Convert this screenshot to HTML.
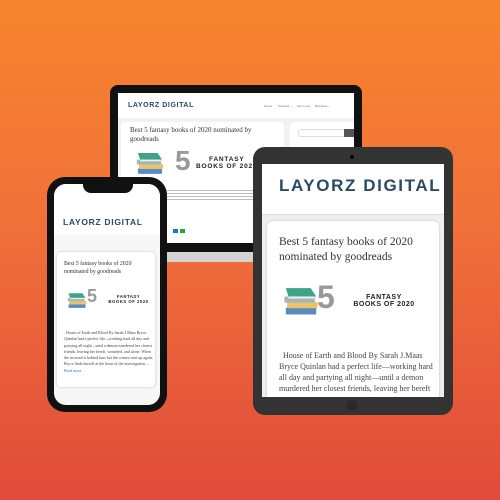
<!DOCTYPE html>
<html><head><meta charset="utf-8"><style>
*{margin:0;padding:0;box-sizing:border-box}
body{width:500px;height:500px;overflow:hidden;position:relative;background:linear-gradient(180deg,#f7852d 0%,#f0703a 45%,#e04b3a 100%);font-family:"Liberation Serif",serif}
.a{position:absolute}
.logo{font-family:"Liberation Sans",sans-serif;font-weight:bold;color:#2b4a5f;white-space:nowrap}
.t{color:#333;font-family:"Liberation Serif",serif}
.five{font-family:"Liberation Sans",sans-serif;font-weight:bold;color:#999}
.fb{font-family:"Liberation Sans",sans-serif;font-weight:bold;color:#222;letter-spacing:.5px;text-align:center;line-height:1.05}
.body{color:#444;font-family:"Liberation Serif",serif}
</style></head><body>
<svg width="0" height="0" style="position:absolute"><defs>
<g id="bk"><rect x="2" y="14" width="22" height="5" rx="1" fill="#5a8bc0"/><rect x="3" y="10" width="22" height="4.5" rx="1" fill="#e9c46a"/><rect x="1" y="6" width="22" height="4.5" rx="1" fill="#a9b3b8"/><path d="M2 0 L20 0 L24 6 L4 6Z" fill="#3fa38a"/><rect x="4" y="6" width="20" height="1.5" fill="#eee"/></g>
</defs></svg>

<!-- laptop -->
<div class="a" style="left:110px;top:85px;width:252px;height:170px;background:#111;border-radius:8px"></div>
<div class="a" style="left:104px;top:252px;width:264px;height:10px;background:#d3d3d3;border-radius:0 0 6px 6px"></div>
<div class="a" style="left:118px;top:93px;width:236px;height:150px;background:#f2f2f2;overflow:hidden">
 <div class="a" style="left:0;top:0;width:236px;height:25px;background:#fff"></div>
 <div class="a logo" style="left:10px;top:9px;font-size:7px;letter-spacing:.6px">LAYORZ DIGITAL</div>
 <div class="a" style="left:146px;top:11px;font-size:3px;color:#4a7ab0;font-family:Liberation Sans;white-space:nowrap">Home &nbsp;&nbsp;&nbsp;&nbsp;&nbsp; Success ⌄ &nbsp;&nbsp;&nbsp;&nbsp; Eco Lens &nbsp;&nbsp;&nbsp;&nbsp; Business ⌄</div>
 <div class="a" style="left:3px;top:29px;width:163px;height:130px;background:#fff;border-radius:4px"></div>
 <div class="a" style="left:172px;top:29px;width:64px;height:40px;background:#fff;border-radius:4px"></div>
 <div class="a" style="left:180px;top:36px;width:50px;height:8px;border:1px solid #ddd;border-radius:3px;background:#fff"></div>
 <div class="a" style="left:226px;top:36px;width:10px;height:8px;background:#555"></div>
 <div class="a t" style="left:12px;top:33px;width:145px;font-size:7px;line-height:9px">Best 5 fantasy books of 2020 nominated by goodreads</div>
 <svg class="a" style="left:17px;top:60px" width="30" height="22" viewBox="0 0 26 20"><use href="#bk"/></svg>
 <div class="a five" style="left:57px;top:52px;font-size:28px">5</div>
 <div class="a fb" style="left:78px;top:64px;width:88px;font-size:6.5px;text-align:left;letter-spacing:.8px">&nbsp;&nbsp;&nbsp;&nbsp;&nbsp;FANTASY<br>BOOKS OF 2020</div>
 <div class="a" style="left:48px;top:97px;width:115px;height:1px;background:#bbb;box-shadow:0 3px 0 #bbb,0 6px 0 #bbb,0 9px 0 #bbb"></div>
 <div class="a" style="left:55px;top:136px;width:5px;height:4px;background:#1d79c0"></div>
 <div class="a" style="left:62px;top:136px;width:5px;height:4px;background:#2aa83a"></div>
</div>

<!-- tablet -->
<div class="a" style="left:253px;top:147px;width:200px;height:268px;background:#333;border-radius:12px"></div>
<div class="a" style="left:350px;top:155px;width:4px;height:4px;background:#000;border-radius:50%"></div>
<div class="a" style="left:346px;top:400px;width:12px;height:10px;background:#2a2a2a;border-radius:50%"></div>
<div class="a" style="left:262px;top:164px;width:182px;height:233px;background:#efefef;overflow:hidden">
 <div class="a" style="left:0;top:0;width:182px;height:51px;background:#fff;border-bottom:1px solid #ddd"></div>
 <div class="a logo" style="left:17px;top:12px;font-size:17px;letter-spacing:1.6px">LAYORZ DIGITAL</div>
 <div class="a" style="left:5px;top:57px;width:172px;height:190px;background:#fff;border-radius:6px;box-shadow:0 0 2px #bbb"></div>
 <div class="a t" style="left:17px;top:71px;width:160px;font-size:11.5px;line-height:14.5px">Best 5 fantasy books of 2020 nominated by goodreads</div>
 <svg class="a" style="left:21px;top:124px" width="36" height="28" viewBox="0 0 26 20"><use href="#bk"/></svg>
 <div class="a five" style="left:55px;top:116px;font-size:32px;line-height:34px">5</div>
 <div class="a fb" style="left:82px;top:130px;width:80px;font-size:7px">FANTASY<br>BOOKS OF 2020</div>
 <div class="a body" style="left:17px;top:186px;width:158px;font-size:8px;line-height:11px">&nbsp; House of Earth and Blood By Sarah J.Maas Bryce Quinlan had a perfect life—working hard all day and partying all night—until a demon murdered her closest friends, leaving her bereft</div>
</div>

<!-- phone -->
<div class="a" style="left:47px;top:177px;width:120px;height:235px;background:#111;border-radius:18px"></div>
<div class="a" style="left:54px;top:184px;width:106px;height:221px;background:#f7f7f7;border-radius:12px;overflow:hidden">
 <div class="a" style="left:0;top:0;width:106px;height:50px;background:#fff"></div>
 <div class="a logo" style="left:9px;top:33px;font-size:8.5px;letter-spacing:.7px">LAYORZ DIGITAL</div>
 <div class="a" style="left:3px;top:68px;width:98px;height:135px;background:#fff;border-radius:4px;box-shadow:0 0 2px #bbb"></div>
 <div class="a t" style="left:10px;top:77px;width:90px;font-size:5.8px;line-height:7.5px">Best 5 fantasy books of 2020 nominated by goodreads</div>
 <svg class="a" style="left:13px;top:109px" width="20" height="16" viewBox="0 0 26 20"><use href="#bk"/></svg>
 <div class="a five" style="left:33px;top:102px;font-size:18px">5</div>
 <div class="a fb" style="left:47px;top:111px;width:55px;font-size:4.3px">FANTASY<br>BOOKS OF 2020</div>
 <div class="a body" style="left:10px;top:146px;width:90px;font-size:4px;line-height:6.3px">&nbsp; House of Earth and Blood By Sarah J.Maas Bryce Quinlan had a perfect life—working hard all day and partying all night—until a demon murdered her closest friends, leaving her bereft, wounded, and alone. When the accused is behind bars but the crimes start up again, Bryce finds herself at the heart of the investigation. ... <span style="color:#3a7bc0">Read more</span></div>
</div>
<div class="a" style="left:83px;top:184px;width:50px;height:9px;background:#111;border-radius:0 0 8px 8px"></div>
</body></html>
